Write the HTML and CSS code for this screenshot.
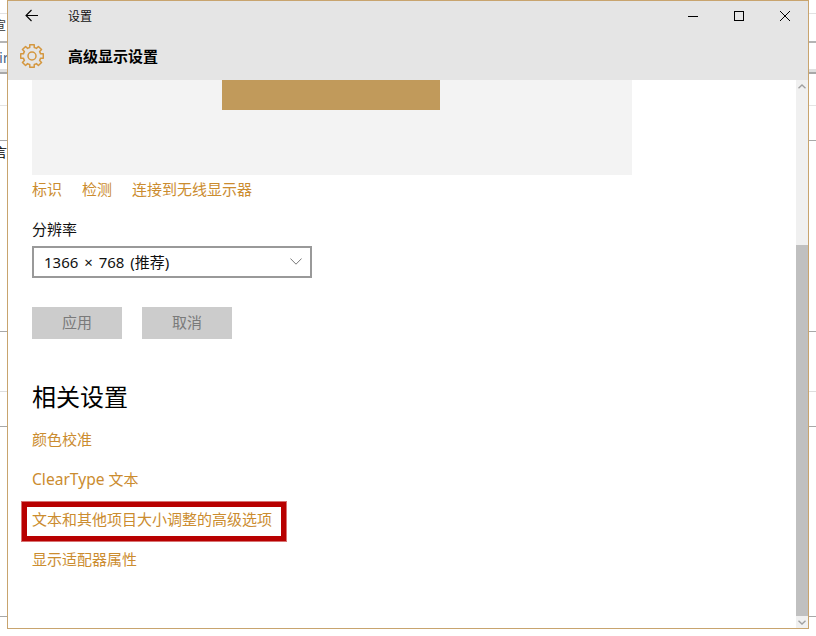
FILE: index.html
```html
<!DOCTYPE html>
<html lang="zh">
<head>
<meta charset="utf-8">
<title>设置</title>
<link rel="stylesheet" href="styles.css">
</head>
<body>
<div class="backdrop" aria-hidden="true">
  <i class="rule r1"></i><i class="rule r2"></i><i class="rule r3"></i><i class="rule r4"></i><i class="rule r5"></i>
  <i class="rule r6"></i><i class="rule r7"></i><i class="rule r8"></i><i class="rule r9"></i>
  <span class="scrap s1">宣</span><span class="scrap s2">ir</span><span class="scrap s3">言</span>
</div>
<main class="window">
  <header class="head">
    <div class="titlebar">
      <button class="back" aria-label="返回">
        <svg width="16" height="14" viewBox="0 0 16 14"><path d="M14 6.5H2M7.5 1L2 6.5 7.5 12" fill="none" stroke="#000" stroke-width="1.1"/></svg>
      </button>
      <span class="apptitle">设置</span>
      <div class="controls">
        <svg width="46" height="30" viewBox="0 0 46 30"><path d="M18 15.5h10" stroke="#000" stroke-width="1"/></svg>
        <svg width="46" height="30" viewBox="0 0 46 30"><rect x="18.5" y="10.5" width="9" height="9" fill="none" stroke="#000" stroke-width="1"/></svg>
        <svg width="46" height="30" viewBox="0 0 46 30"><path d="M18 10l10 10M28 10L18 20" stroke="#000" stroke-width="1"/></svg>
      </div>
    </div>
    <div class="pagehead">
      <svg class="gear" width="24" height="24" viewBox="0 0 24 24"><path fill="none" stroke="#d4973f" stroke-width="1.5" stroke-linejoin="round" d="M9.72 3.5L9.81.71H14.19L14.28 3.5A8.8 8.8 0 0 1 16.4 4.38L18.43 2.47 21.53 5.57 19.62 7.6A8.8 8.8 0 0 1 20.5 9.72L23.29 9.81V14.19L20.5 14.28A8.8 8.8 0 0 1 19.62 16.4L21.53 18.43 18.43 21.53 16.4 19.62A8.8 8.8 0 0 1 14.28 20.5L14.19 23.29H9.81L9.72 20.5A8.8 8.8 0 0 1 7.6 19.62L5.57 21.53 2.47 18.43 4.38 16.4A8.8 8.8 0 0 1 3.5 14.28L.71 14.19V9.81L3.5 9.72A8.8 8.8 0 0 1 4.38 7.6L2.47 5.57 5.57 2.47 7.6 4.38A8.8 8.8 0 0 1 9.72 3.5Z"/><circle cx="12" cy="12" r="4" fill="none" stroke="#d4973f" stroke-width="1.5"/></svg>
      <h1>高级显示设置</h1>
    </div>
  </header>
  <div class="body">
    <div class="content">
      <div class="preview"><div class="monitor"></div></div>
      <nav class="linkrow">
        <a>标识</a><a>检测</a><a>连接到无线显示器</a>
      </nav>
      <label class="fieldlabel">分辨率</label>
      <div class="combo">
        <span>1366 × 768 (推荐)</span>
        <svg width="12" height="7" viewBox="0 0 12 7"><path d="M.4.5L6 6.2 11.6.5" fill="none" stroke="#777" stroke-width="1"/></svg>
      </div>
      <div class="actions">
        <button class="btn">应用</button>
        <button class="btn">取消</button>
      </div>
      <h2>相关设置</h2>
      <ul class="related">
        <li><a>颜色校准</a></li>
        <li><a><span class="latin">ClearType</span> 文本</a></li>
        <li><a class="marked">文本和其他项目大小调整的高级选项<span class="redbox"></span></a></li>
        <li><a>显示适配器属性</a></li>
      </ul>
    </div>
    <div class="scrollbar">
      <div class="arrow"><svg width="8" height="5" viewBox="0 0 8 5"><path d="M.5 4.2L4 1l3.5 3.2" fill="none" stroke="#a0a0a0" stroke-width="1.4"/></svg></div>
      <div class="track"></div>
      <div class="thumb"></div>
      <div class="arrow end"><svg width="8" height="5" viewBox="0 0 8 5"><path d="M.5.8L4 4l3.5-3.2" fill="none" stroke="#a0a0a0" stroke-width="1.4"/></svg></div>
    </div>
  </div>
</main>
</body>
</html>
```
FILE: styles.css
```css
* { box-sizing: border-box; }
html, body { margin: 0; height: 100%; background: #fff; overflow: hidden; }
body { font-family: "Noto Sans CJK SC", "Noto Sans", sans-serif; color: #000; position: relative; }

.backdrop { position: absolute; inset: 0; overflow: hidden; }
.rule { position: absolute; left: 0; right: 0; height: 1px; background: #a8a8a8; }
.r1 { top: 13px; background: #e2e2e2; }
.r2 { top: 41px; height: 2px; background: #b4b4b4; }
.r3 { top: 69px; height: 5px; background: linear-gradient(#e0e0e0 0 3px, #a8a8a8 3px); }
.r4 { top: 105px; background: #e4e4e4; }
.r5 { top: 140px; }
.r6 { top: 331px; }
.r7 { top: 391px; background: #dedede; }
.r8 { top: 426px; }
.r9 { top: 616px; }
.scrap { position: absolute; line-height: 1; }
.s1 { left: -6px; top: 19px; font-size: 12px; color: #333; }
.s2 { left: -1px; top: 50px; font-size: 14px; color: #47658c; }
.s3 { left: -6px; top: 145px; font-size: 13px; }

.window {
  position: absolute; left: 7px; top: 0;
  width: 802px; height: 629px;
  border: 1px solid #c8a46e;
  background: #fff;
  display: flex; flex-direction: column;
}

.head { height: 79px; background: #e5e5e5; flex: none; }
.titlebar { height: 30px; display: flex; align-items: center; position: relative; }
.back { width: 48px; height: 30px; padding: 0 0 0 16px; border: 0; background: none; display: flex; align-items: center; }
.apptitle { margin-left: 12px; font-size: 12px; line-height: 30px; color: #111; }
.controls { margin-left: auto; display: flex; }
.controls svg { display: block; }
.pagehead { height: 49px; display: flex; align-items: center; padding-left: 12px; }
.pagehead .gear { flex: none; }
.pagehead h1 { margin: 0 0 0 24px; font-size: 15px; font-weight: 700; line-height: 24px; }

.body { flex: 1; display: flex; min-height: 0; }
.content { flex: 1; padding-left: 24px; min-width: 0; }
.preview { width: 600px; height: 95px; background: #f3f3f3; padding-left: 190px; }
.monitor { width: 218px; height: 30px; background: #c19a5b; }

a { color: #cb8c2f; }
.linkrow { display: flex; gap: 20px; height: 30px; padding-bottom: 3px; align-items: center; font-size: 15px; }
.fieldlabel { display: block; margin-top: 9px; height: 30px; line-height: 30px; font-size: 15px; color: #111; }
.combo {
  margin-top: 2px; width: 280px; height: 32px;
  border: 2px solid #999; display: flex; align-items: center; justify-content: space-between;
  padding: 0 8px 2px 10px; font-size: 15px; word-spacing: 2px; color: #111;
}
.combo span { font-family: "Noto Sans", "Noto Sans CJK SC", sans-serif; }
.actions { display: flex; gap: 20px; margin-top: 29px; }
.btn { width: 90px; height: 32px; border: 0; background: #ccc; color: #7a7a7a; font: 15px "Noto Sans CJK SC", sans-serif; padding: 0 0 3px; }
h2 { margin: 39px 0 0; font-size: 24px; font-weight: 400; line-height: 36px; height: 36px; }
.related { list-style: none; margin: 5px 0 0; padding: 0; font-size: 15px; }
.related li { height: 40px; line-height: 40px; }
.related a { font-family: "Noto Sans", "Noto Sans CJK SC", sans-serif; }
.latin { font-size: 15.6px; }
.marked { position: relative; display: inline-block; line-height: 40px; }
.redbox { position: absolute; left: -11px; right: -15px; top: 2px; height: 41px; border: 6px solid #b80000; outline: 1px solid rgba(255,255,255,.45); outline-offset: -1px; }

.scrollbar { width: 12px; flex: none; background: #f0f0f0; display: flex; flex-direction: column; }
.arrow { height: 12px; flex: none; display: flex; align-items: center; justify-content: center; }
.track { height: 153px; flex: none; }
.thumb { flex: 1; background: #c0c0c0; }
```
